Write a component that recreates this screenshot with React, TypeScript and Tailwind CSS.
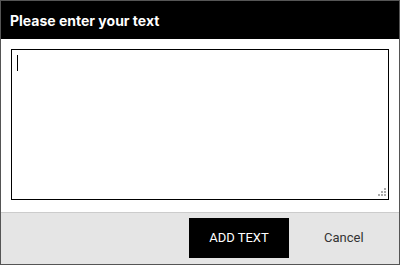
export default function App() {
  return (
    <div className="flex h-[265px] w-[400px] flex-col border border-[#555] bg-white font-['Roboto',sans-serif]">
      <header className="flex h-[38px] shrink-0 items-center bg-black px-[9px]">
        <h1 className="font-['Inter',sans-serif] text-[14px] font-bold text-white">Please enter your text</h1>
      </header>

      <div className="flex-1 px-[10px] pb-[12px] pt-[10px]">
        <div className="relative h-full w-full">
          <textarea className="block h-full w-full resize-none border border-black px-[5px] py-[4px] text-[13px] leading-[16px] text-black caret-transparent outline-none" />
          {/* caret */}
          <span className="pointer-events-none absolute left-[6px] top-[6px] h-[16px] w-px bg-black" />
          {/* resize grip */}
          <div className="pointer-events-none absolute bottom-[4px] right-[3px] grid grid-cols-3 gap-px">
            <span className="h-[2px] w-[2px]" />
            <span className="h-[2px] w-[2px]" />
            <span className="h-[2px] w-[2px] bg-[#aaa]" />
            <span className="h-[2px] w-[2px]" />
            <span className="h-[2px] w-[2px] bg-[#aaa]" />
            <span className="h-[2px] w-[2px] bg-[#aaa]" />
            <span className="h-[2px] w-[2px] bg-[#aaa]" />
            <span className="h-[2px] w-[2px] bg-[#aaa]" />
            <span className="h-[2px] w-[2px] bg-[#aaa]" />
          </div>
        </div>
      </div>

      <footer className="flex h-[52px] shrink-0 items-center border-t border-[#cccccc] bg-[#e5e5e5] pb-[1px] pl-[188px]">
        <button type="button" className="h-[40px] w-[100px] bg-black text-[13px] text-white">
          ADD TEXT
        </button>
        <button type="button" className="ml-[35px] text-[13px] text-[#333]">
          Cancel
        </button>
      </footer>
    </div>
  );
}
